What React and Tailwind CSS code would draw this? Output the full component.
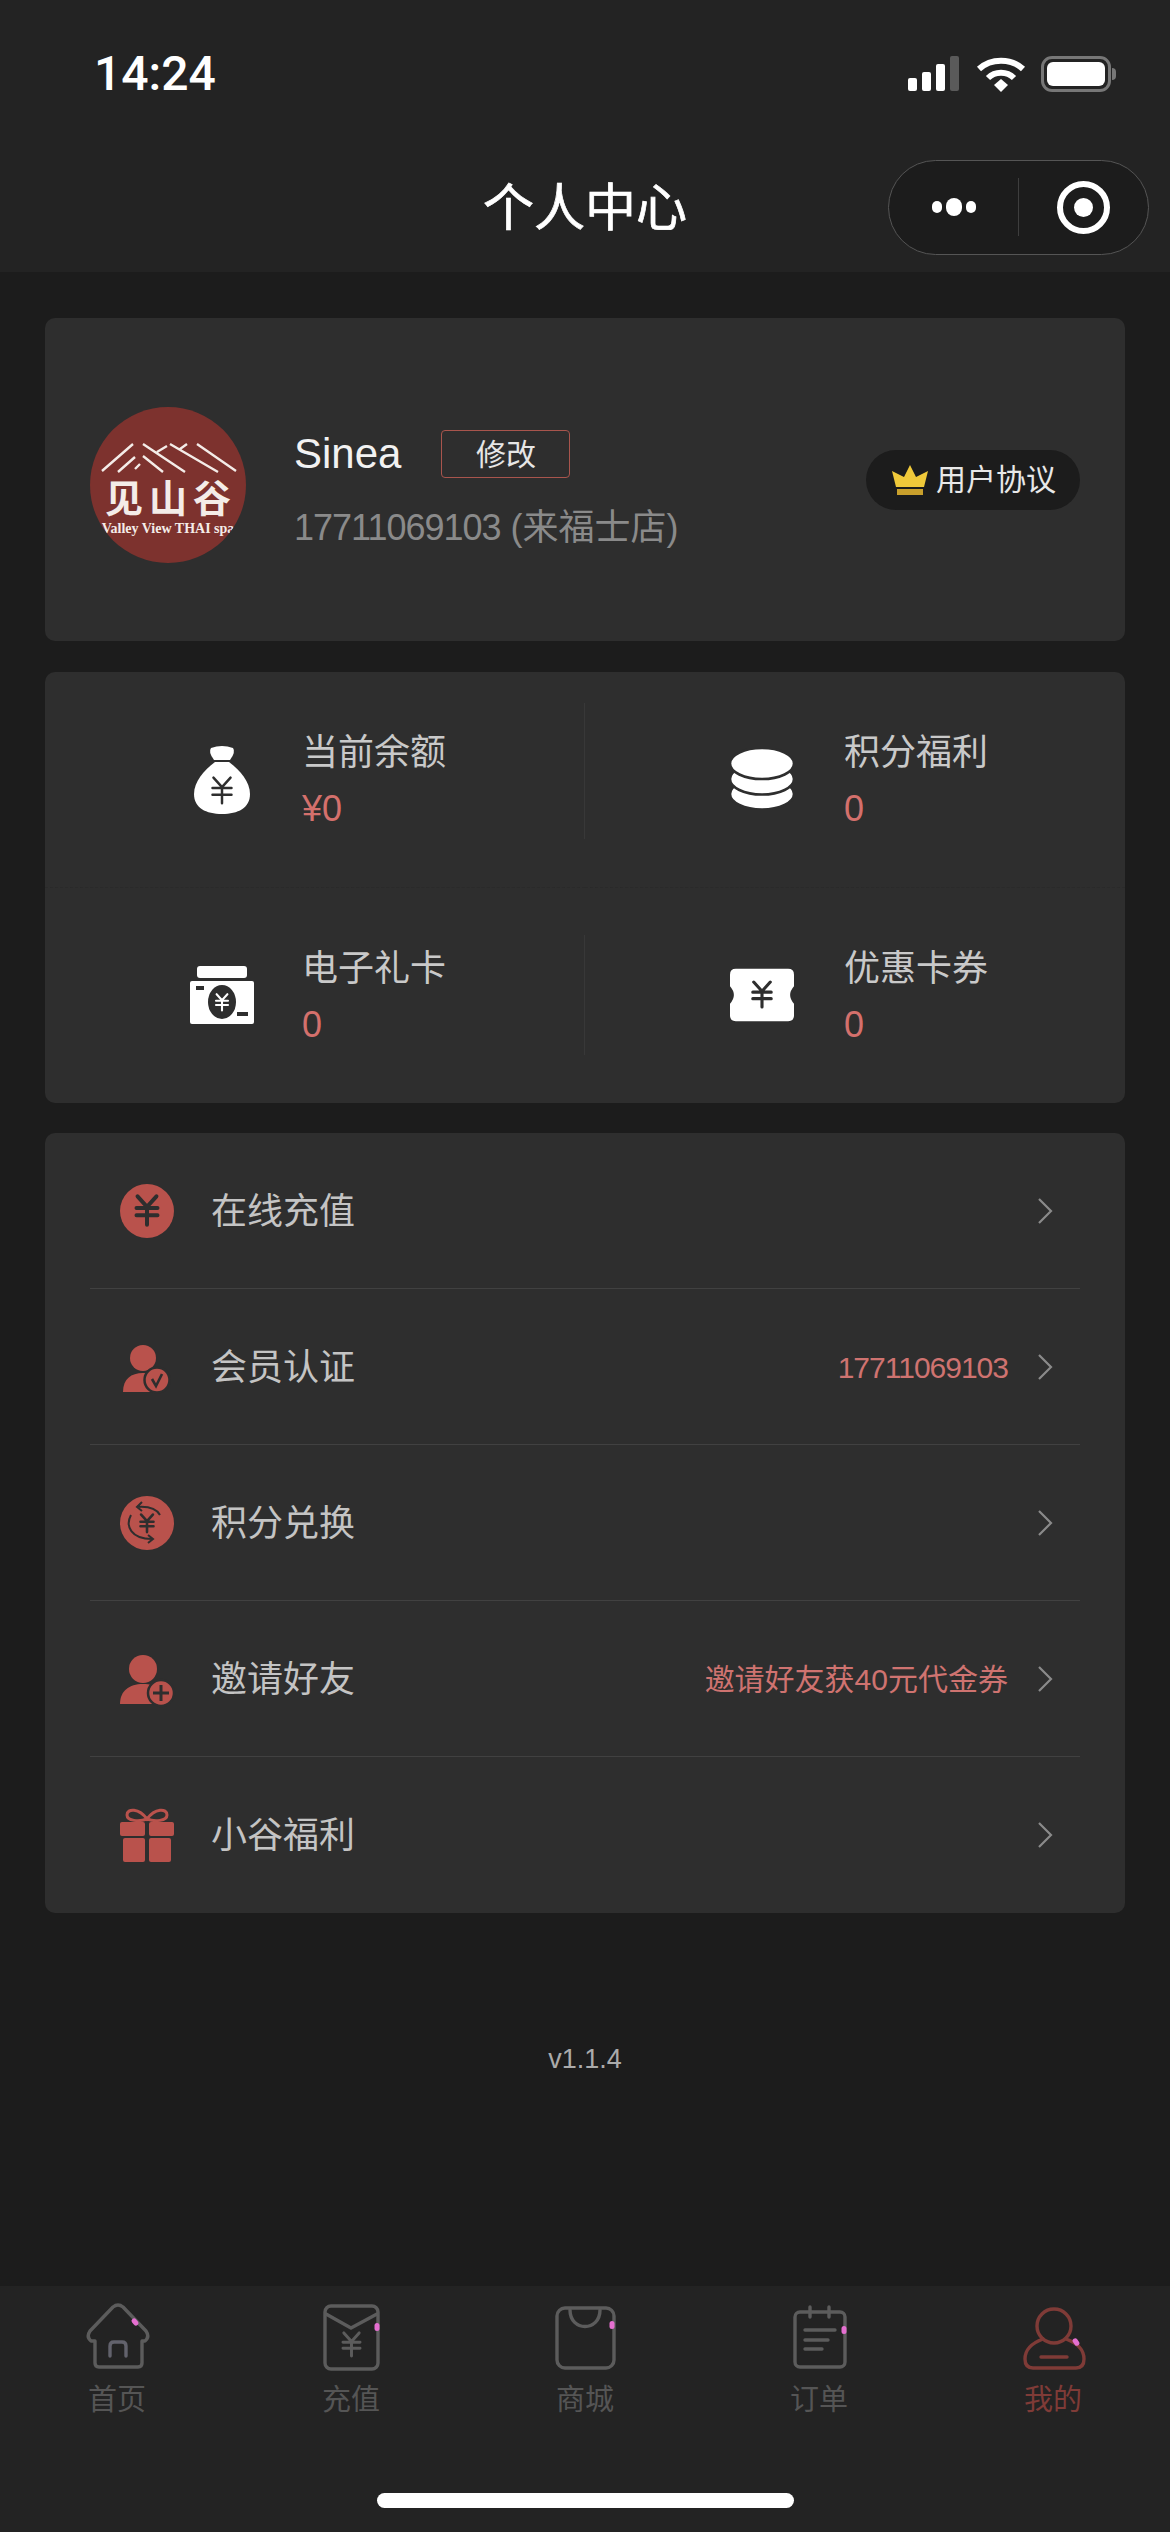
import React from 'react';

const MENU_RED = '#b9524c';

const Yen = ({ x, y, s = 1, color, width = 3 }) => (
  <g transform={`translate(${x} ${y}) scale(${s})`} fill="none" stroke={color} strokeWidth={width} strokeLinecap="round">
    <path d="M-9 -13 L0 -3 L9 -13 M-10 -2 H10 M-10 5 H10 M0 -3 V14" />
  </g>
);

const StatusIcons = () => (
  <div className="flex items-center">
    <svg width="52" height="36" viewBox="0 0 52 36" fill="#fff">
      <rect x="0" y="22" width="9" height="13" rx="2" />
      <rect x="14" y="16" width="9" height="19" rx="2" />
      <rect x="28" y="8" width="9" height="27" rx="2" />
      <rect x="42" y="0" width="9" height="35" rx="2" fill="#5a5a5a" />
    </svg>
    <svg className="ml-[16px]" width="50" height="36" viewBox="0 0 50 36" fill="none" stroke="#fff" strokeWidth="6">
      <path d="M3 13 C15 2 35 2 47 13" />
      <path d="M12 22 C19 15 31 15 38 22" />
      <path d="M18 29 L25 23 L32 29 L25 36 Z" fill="#fff" stroke="none" />
    </svg>
    <div className="ml-[15px] flex items-center">
      <div className="w-[70px] h-[36px] rounded-[11px] border-[3px] border-[#777] p-[3px]">
        <div className="w-full h-full rounded-[6px] bg-white" />
      </div>
      <div className="w-[4px] h-[12px] rounded-r-full bg-[#777] ml-[1px]" />
    </div>
  </div>
);

const Capsule = () => (
  <div className="flex items-center w-[261px] h-[95px] rounded-full border border-[#555] bg-[#1c1c1c]">
    <div className="flex-1 flex items-center justify-center gap-[4px]">
      <div className="w-[10px] h-[12px] rounded-full bg-white" />
      <div className="w-[16px] h-[18px] rounded-full bg-white" />
      <div className="w-[10px] h-[12px] rounded-full bg-white" />
    </div>
    <div className="w-px h-[58px] bg-[#3e3e3e]" />
    <div className="flex-1 flex items-center justify-center">
      <div className="w-[53px] h-[53px] rounded-full border-[6px] border-white flex items-center justify-center">
        <div className="w-[19px] h-[19px] rounded-full bg-white" />
      </div>
    </div>
  </div>
);

const Avatar = () => (
  <div className="mt-[10px] w-[156px] h-[156px] rounded-full bg-[#7d322e] flex flex-col items-center shrink-0 overflow-hidden text-[#f4ece8]">
    <svg className="shrink-0" width="156" height="70" viewBox="0 0 156 70" fill="none" stroke="#f4ece8" strokeWidth="2.4">
      <path d="M12 64 L43 37 M28 65 L45 50 M45 62 L50 57 M53 37 L95 65 M53 49 L73 65 M80 37 L128 65 M107 37 L146 64 M67 45 L77 39 M90 42 L97 37" />
    </svg>
    <div className="h-[44px] flex items-center text-[38px] leading-[44px] font-bold tracking-[6px] pl-[6px] font-['Liberation_Serif','Noto_Sans_CJK_SC',serif]">
      见山谷
    </div>
    <div className="text-[14px] leading-[16px] whitespace-nowrap font-bold font-['Liberation_Serif',serif]">
      Valley View THAI spa
    </div>
  </div>
);

const Crown = () => (
  <svg width="38" height="30" viewBox="0 0 38 30">
    <path d="M19 0 L25 12 L37 6 L33 22 H5 L1 6 L13 12 Z" fill="#f0c93a" />
    <rect x="6" y="24" width="26" height="6" fill="#c9a02c" />
  </svg>
);

const ProfileCard = () => (
  <div className="h-[323px] rounded-[10px] bg-[#2e2e2e] flex items-center px-[45px]">
    <Avatar />
    <div className="mt-[22px] ml-[48px] flex-1">
      <div className="flex items-center h-[48px]">
        <span className="text-[42px] leading-[48px] text-[#f2f2f2]">Sinea</span>
        <div className="ml-[40px] w-[129px] h-[48px] rounded-[4px] border border-[#a9554d] flex items-center justify-center text-[30px] text-[#e6e6e6]">修改</div>
      </div>
      <div className="mt-[27px] text-[36px] leading-[46px] text-[#8a8a8a] whitespace-nowrap">
        <span className="tracking-[-1px]">17711069103</span> (来福士店)
      </div>
    </div>
    <div className="flex items-center w-[214px] h-[60px] rounded-full bg-[#1c1c1c] pl-[25px] gap-[7px]">
      <Crown />
      <span className="text-[30px] leading-[40px] text-[#e8e8e8]">用户协议</span>
    </div>
  </div>
);

const BagIcon = () => (
  <svg width="64" height="70" viewBox="0 0 64 70">
    <path d="M21 4 Q32 0 43 4 Q46 8 40 16 H24 Q18 8 21 4 Z" fill="#fff" />
    <path d="M25 18 H39 C50 26 60 38 60 50 C60 64 48 70 32 70 C16 70 4 64 4 50 C4 38 14 26 25 18 Z" fill="#fff" />
    <Yen x={32} y={46} s={0.95} color="#2e2e2e" width={2.6} />
  </svg>
);

const CoinsIcon = () => (
  <svg width="64" height="62" viewBox="0 0 64 62" fill="#fff" stroke="#2e2e2e" strokeWidth="2.6">
    <ellipse cx="32" cy="46" rx="32" ry="15.5" />
    <ellipse cx="32" cy="31" rx="32" ry="15.5" />
    <ellipse cx="32" cy="15.5" rx="32" ry="15.5" />
  </svg>
);

const CardIcon = () => (
  <svg width="64" height="58" viewBox="0 0 64 58">
    <rect x="7" y="0" width="50" height="12" rx="3" fill="#fff" />
    <rect x="0" y="15" width="64" height="43" rx="2" fill="#fff" />
    <ellipse cx="32" cy="36" rx="14" ry="17" fill="#2e2e2e" />
    <Yen x={32} y={36} s={0.6} color="#fff" width={3.5} />
    <rect x="6" y="20" width="8" height="4" fill="#2e2e2e" />
    <rect x="47" y="46" width="11" height="4" fill="#2e2e2e" />
  </svg>
);

const TicketIcon = () => (
  <svg width="66" height="54" viewBox="0 0 66 54">
    <path d="M6 0 H60 Q66 0 66 6 V18 Q58 27 66 36 V48 Q66 54 60 54 H6 Q0 54 0 48 V36 Q8 27 0 18 V6 Q0 0 6 0 Z" fill="#fff" />
    <Yen x={33} y={26} s={0.95} color="#2e2e2e" width={3.4} />
  </svg>
);

const stats = [
  { label: '当前余额', value: '¥0', icon: <BagIcon /> },
  { label: '积分福利', value: '0', icon: <CoinsIcon /> },
  { label: '电子礼卡', value: '0', icon: <CardIcon /> },
  { label: '优惠卡券', value: '0', icon: <TicketIcon /> },
];

const StatCell = ({ item, index }) => (
  <div className={`relative h-full flex items-center pl-[145px] ${index < 2 ? 'border-b border-dashed border-[#2a2a2a]' : ''}`}>
    <div className="w-[64px] flex justify-center shrink-0">{item.icon}</div>
    <div className={`mt-[3px] ${index % 2 === 0 ? 'ml-[48px]' : 'ml-[50px]'}`}>
      <div className="text-[36px] leading-[50px] text-[#c9c9c9]">{item.label}</div>
      <div className="mt-[6px] text-[36px] leading-[50px] text-[#d4706c]">{item.value}</div>
    </div>
    {index === 0 && <div className="absolute right-0 top-[31px] bottom-[48px] w-px bg-[#383838]" />}
    {index === 2 && <div className="absolute right-0 top-[47px] bottom-[48px] w-px bg-[#383838]" />}
  </div>
);

const StatsCard = () => (
  <div className="h-[431px] rounded-[10px] bg-[#2e2e2e] grid grid-cols-2 grid-rows-2">
    {stats.map((item, i) => (
      <StatCell key={item.label} item={item} index={i} />
    ))}
  </div>
);

const IconBox = ({ children }) => (
  <svg width="60" height="60" viewBox="0 0 60 60" className="shrink-0">{children}</svg>
);

const menu = [
  {
    label: '在线充值',
    icon: (
      <IconBox>
        <circle cx="30" cy="30" r="27" fill={MENU_RED} />
        <Yen x={30} y={29} s={1.05} color="#2e2e2e" width={3.8} />
      </IconBox>
    ),
  },
  {
    label: '会员认证',
    value: '17711069103',
    icon: (
      <IconBox>
        <circle cx="26" cy="21" r="13" fill={MENU_RED} />
        <path d="M6 55 C6 42 14 36 26 36 C38 36 46 42 46 55 Z" fill={MENU_RED} />
        <circle cx="40" cy="43" r="12.5" fill={MENU_RED} stroke="#2e2e2e" strokeWidth="2.5" />
        <path d="M35 42 L39 49 L45 37" fill="none" stroke="#2e2e2e" strokeWidth="2.6" />
      </IconBox>
    ),
  },
  {
    label: '积分兑换',
    icon: (
      <IconBox>
        <circle cx="30" cy="30" r="27" fill={MENU_RED} />
        <Yen x={30} y={30} s={0.65} color="#2e2e2e" width={4} />
        <path d="M43 22 C39 15 32 13 20 14 M25 9 L20 14 L25 18 M14 22 C8 33 14 46 35 46 M31 42 L36 46 L31 50" fill="none" stroke="#2e2e2e" strokeWidth="2" />
      </IconBox>
    ),
  },
  {
    label: '邀请好友',
    value: '邀请好友获40元代金券',
    icon: (
      <IconBox>
        <circle cx="26" cy="20" r="14" fill={MENU_RED} />
        <path d="M3 55 C3 42 12 35 26 35 C40 35 49 42 49 55 Z" fill={MENU_RED} />
        <circle cx="44" cy="44" r="13" fill={MENU_RED} stroke="#2e2e2e" strokeWidth="2.5" />
        <path d="M36 44 H52 M44 36 V52" stroke="#2e2e2e" strokeWidth="3" />
      </IconBox>
    ),
  },
  {
    label: '小谷福利',
    icon: (
      <IconBox>
        <path d="M30 14 C22 3 10 3 10 10 C10 16 22 17 30 14 C38 17 50 16 50 10 C50 3 38 3 30 14 Z" fill="none" stroke={MENU_RED} strokeWidth="3" />
        <rect x="3" y="17" width="25" height="14" rx="2" fill={MENU_RED} />
        <rect x="32" y="17" width="25" height="14" rx="2" fill={MENU_RED} />
        <rect x="6" y="33" width="22" height="24" rx="2" fill={MENU_RED} />
        <rect x="32" y="33" width="22" height="24" rx="2" fill={MENU_RED} />
      </IconBox>
    ),
  },
];

const MenuCard = () => (
  <div className="rounded-[10px] bg-[#2e2e2e] px-[45px]">
    {menu.map((row, i) => (
      <div key={row.label} className={`h-[156px] flex items-center ${i < menu.length - 1 ? 'border-b border-[#414141]' : ''}`}>
        <div className="ml-[27px]">{row.icon}</div>
        <span className="ml-[34px] mt-[2px] text-[36px] leading-[50px] text-[#c4c4c4]">{row.label}</span>
        <div className="flex-1" />
        {row.value && (
          <span className={`mt-[2px] text-[30px] leading-[40px] text-[#cf7370] ${i === 1 ? 'tracking-[-1px]' : ''}`}>{row.value}</span>
        )}
        <svg className="ml-[29px] mr-[27px]" width="16" height="28" viewBox="0 0 16 28" fill="none" stroke="#8a8a8a" strokeWidth="2.2">
          <path d="M2 2 L14 14 L2 26" />
        </svg>
      </div>
    ))}
  </div>
);

const GREY = '#5c5c5c';
const ACTIVE = '#7f3b37';

const Dot = ({ x, y, rotate = 0 }) => (
  <rect x={x - 2.5} y={y - 4} width="5" height="8" rx="2.5" fill="#e56fd0" stroke="none" transform={`rotate(${rotate} ${x} ${y})`} />
);

const tabs = [
  {
    label: '首页',
    icon: (
      <>
        <path d="M13 60 V38 H9 Q4 34 8 28 L31 4 Q36 0 41 4 L64 28 Q68 34 63 38 H60 V60 Q60 64 56 64 H17 Q13 64 13 60 Z" />
        <path d="M28 53 V43 Q28 39 32 39 H40 Q44 39 44 43 V53" stroke="#62626c" />
        <Dot x={53} y={19} rotate={-40} />
      </>
    ),
  },
  {
    label: '充值',
    icon: (
      <>
        <rect x="9" y="3" width="53" height="63" rx="6" />
        <path d="M10 11 L35 25 L61 11" />
        <Yen x={35.5} y={41} s={0.85} color={GREY} width={3.5} />
        <Dot x={61} y={24} />
      </>
    ),
  },
  {
    label: '商城',
    icon: (
      <>
        <rect x="7" y="5" width="57" height="60" rx="8" />
        <path d="M20 7 C20 29 50 29 50 7" />
        <Dot x={62} y={22} />
      </>
    ),
  },
  {
    label: '订单',
    icon: (
      <>
        <rect x="11" y="9" width="50" height="55" rx="5" />
        <path d="M26 4 V14 M45 4 V14 M21 27 H51 M21 37 H44 M21 46 H38" />
        <Dot x={60} y={27} />
      </>
    ),
  },
  {
    label: '我的',
    active: true,
    icon: (
      <>
        <circle cx="36" cy="23" r="17" />
        <path d="M25 36 C14 40 7 47 7 56 Q7 65 15 65 H58 Q66 65 66 56 C66 47 59 40 48 36" />
        <path d="M23 54 H49" />
        <Dot x={58} y={39} rotate={-35} />
      </>
    ),
  },
];

const TabBar = () => (
  <div className="bg-[#232323] h-[246px] pt-[17px] flex flex-col">
    <div className="grid grid-cols-5">
      {tabs.map(tab => (
        <div key={tab.label} className="flex flex-col items-center">
          <svg width="70" height="70" viewBox="0 0 70 70" fill="none" stroke={tab.active ? ACTIVE : GREY} strokeWidth="3.4" strokeLinecap="round" strokeLinejoin="round">
            {tab.icon}
          </svg>
          <span className={`mt-[10px] text-[29px] leading-[34px] ${tab.active ? 'text-[#7f3b37]' : 'text-[#555555]'}`}>{tab.label}</span>
        </div>
      ))}
    </div>
    <div className="mt-[76px] mx-auto w-[417px] h-[15px] rounded-full bg-white" />
  </div>
);

export default function App() {
  return (
    <div className="w-[1170px] h-[2532px] flex flex-col bg-[#1c1c1c] overflow-hidden font-['Liberation_Sans','Noto_Sans_CJK_SC',sans-serif]">
      <div className="bg-[#232323] h-[272px] shrink-0">
        <div className="h-[142px] pt-[6px] flex items-center justify-between pl-[94px] pr-[54px]">
          <span className="text-[48px] leading-[56px] font-medium text-white font-['Roboto',sans-serif]">14:24</span>
          <StatusIcons />
        </div>
        <div className="h-[130px] grid grid-cols-[1fr_auto_1fr] items-center">
          <div />
          <h1 className="mt-[3px] text-[51px] leading-[64px] font-normal text-white [-webkit-text-stroke:0.7px_white]">个人中心</h1>
          <div className="justify-self-end pr-[21px]"><Capsule /></div>
        </div>
      </div>

      <div className="flex-1 px-[45px] pt-[46px] flex flex-col">
        <ProfileCard />
        <div className="mt-[31px]"><StatsCard /></div>
        <div className="mt-[30px]"><MenuCard /></div>
        <div className="mt-[126px] text-center text-[27px] leading-[40px] text-[#ababab]">v1.1.4</div>
      </div>

      <TabBar />
    </div>
  );
}
